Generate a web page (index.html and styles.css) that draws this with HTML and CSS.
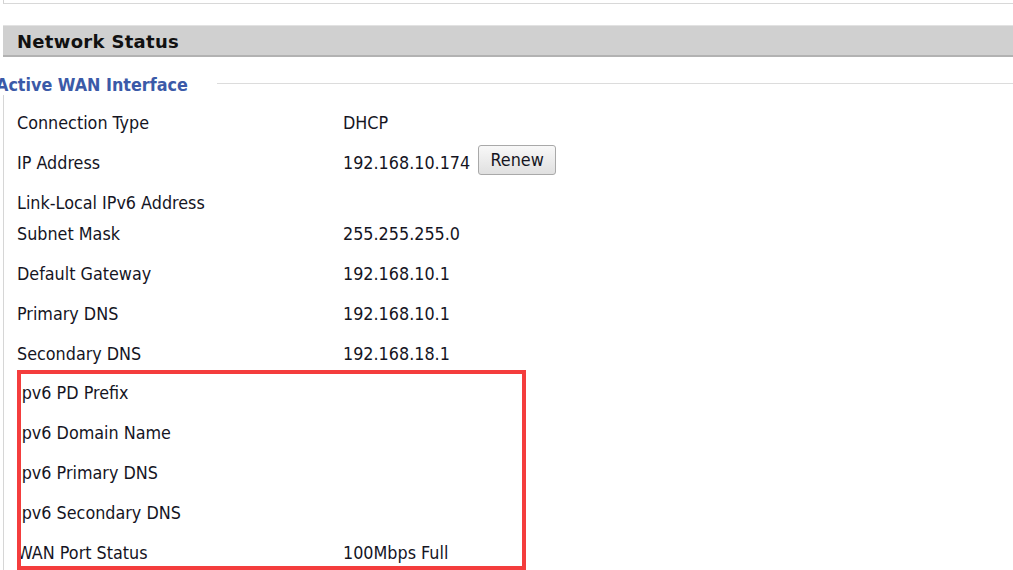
FILE: index.html
```html
<!DOCTYPE html>
<html>
<head>
<meta charset="utf-8">
<title>Network Status</title>
<link rel="stylesheet" href="styles.css">
</head>
<body>
<div class="page">
  <div class="top-box"></div>
  <div class="section-head">Network Status</div>
  <div class="group">
    <div class="group-legend">
      <span class="group-title">Active WAN Interface</span>
      <span class="group-rule"></span>
    </div>
    <div class="group-body">
      <div class="row"><span class="label">Connection Type</span><span class="value">DHCP</span></div>
      <div class="row"><span class="label">IP Address</span><span class="value">192.168.10.174</span><button class="btn">Renew</button></div>
      <div class="row row-short"><span class="label">Link-Local IPv6 Address</span><span class="value"></span></div>
      <div class="row"><span class="label">Subnet Mask</span><span class="value">255.255.255.0</span></div>
      <div class="row"><span class="label">Default Gateway</span><span class="value">192.168.10.1</span></div>
      <div class="row"><span class="label">Primary DNS</span><span class="value">192.168.10.1</span></div>
      <div class="row"><span class="label">Secondary DNS</span><span class="value">192.168.18.1</span></div>
      <div class="row"><span class="label">Ipv6 PD Prefix</span><span class="value"></span></div>
      <div class="row"><span class="label">Ipv6 Domain Name</span><span class="value"></span></div>
      <div class="row"><span class="label">Ipv6 Primary DNS</span><span class="value"></span></div>
      <div class="row"><span class="label">Ipv6 Secondary DNS</span><span class="value"></span></div>
      <div class="row"><span class="label">WAN Port Status</span><span class="value">100Mbps Full</span></div>
    </div>
  </div>
  <div class="highlight"></div>
</div>
</body>
</html>
```

FILE: styles.css
```css
html, body {
  margin: 0;
  padding: 0;
  background: #ffffff;
}

body {
  font-family: "DejaVu Sans Condensed", "DejaVu Sans", sans-serif;
  font-stretch: condensed;
  color: #15151f;
  overflow: hidden;
}

.page {
  position: relative;
  width: 1013px;
  height: 570px;
  overflow: hidden;
}

.top-box {
  margin-left: 3px;
  height: 3px;
  border-left: 1px solid #d2d2d2;
  border-bottom: 1px solid #d8d8d8;
}

.section-head {
  margin-top: 21px;
  margin-left: 3px;
  height: 27px;
  line-height: 27px;
  padding-top: 2px;
  padding-left: 14px;
  background: #d0d0d0;
  border-top: 1px solid #e2e2e2;
  border-bottom: 2px solid #b2b2b2;
  font-family: "DejaVu Sans", sans-serif;
  font-stretch: normal;
  font-weight: bold;
  font-size: 18px;
  letter-spacing: 0.3px;
  color: #111111;
}

.group {
  margin-left: 3px;
}

.group-legend {
  display: flex;
  align-items: center;
  height: 24px;
  margin-top: 14px;
  margin-left: -7px;
}

.group-title {
  font-weight: bold;
  font-size: 17.8px;
  color: #3b5aa8;
  white-space: nowrap;
  padding-top: 2px;
}

.group-rule {
  flex: 1;
  height: 0;
  margin-left: 29px;
  border-top: 1px solid #dcdcdc;
}

.group-body {
  border-left: 1px solid #d6d6d6;
  padding-top: 7px;
  padding-left: 13px;
}

.row {
  display: flex;
  align-items: center;
  height: 39.9px;
  padding-top: 2px;
  box-sizing: border-box;
  font-size: 17.8px;
  line-height: 20px;
  white-space: nowrap;
}

.row-short {
  height: 31.2px;
  align-items: flex-start;
  padding-top: 11.1px;
}

.label {
  width: 326px;
  flex: none;
}

.value {
  flex: none;
}

.btn {
  margin-left: 8px;
  margin-top: -6px;
  width: 78px;
  height: 30px;
  padding: 0;
  border: 1px solid #a9a9a9;
  border-radius: 3px;
  background: linear-gradient(#f8f8f8, #e0e0e0);
  font-family: "DejaVu Sans Condensed", "DejaVu Sans", sans-serif;
  font-stretch: condensed;
  font-size: 17.8px;
  color: #15151f;
}

.highlight {
  position: absolute;
  left: 17px;
  top: 370px;
  width: 501px;
  height: 192px;
  border: 4px solid #f43d3d;
}
```
